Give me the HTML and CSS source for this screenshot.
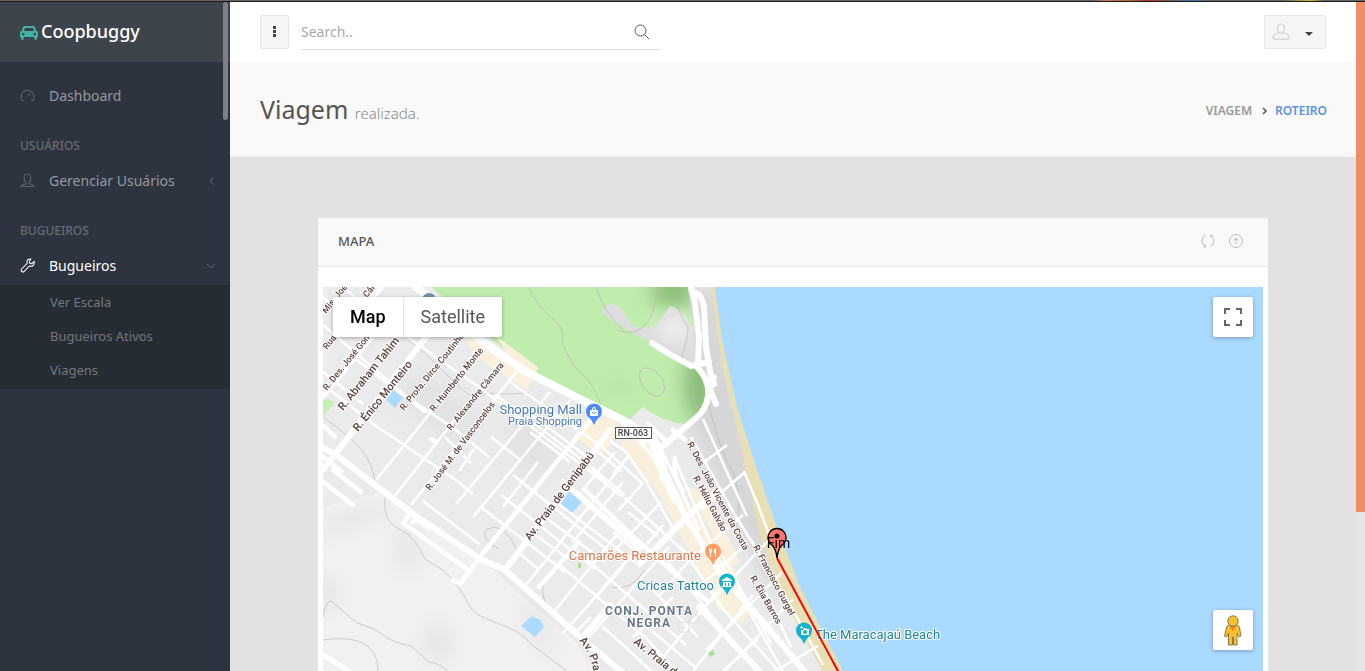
FILE: index.html
```
<!DOCTYPE html>
<html lang="pt-BR">
<head>
<meta charset="utf-8">
<title>Coopbuggy</title>
<meta name="viewport" content="width=device-width, initial-scale=1">
<link rel="stylesheet" href="styles.css">
</head>
<body>
<div class="window-edge"></div>
<div class="app">
  <aside class="sidebar">
    <a class="brand" href="#">
      <svg class="brand-icon" viewBox="0 0 18 16" aria-hidden="true"><path fill="#40b5a4" fill-rule="evenodd" d="M4.800 1h8.400q1.600 0 2 1.500l1 3.500q1.800.2 1.800 2v4h-1v1.600q0 1.400-1.400 1.400t-1.400-1.400v-1.600h-10.400v1.600q0 1.400-1.400 1.400t-1.400-1.400v-1.600h-1v-4q0-1.800 1.800-2l1-3.500q.4-1.500 2-1.500zM4.900 2.900l-.8 3.100h9.800l-.8-3.100zM3.200 7.700a1.300 1.300 0 1 0 .01 0zM14.800 7.700a1.300 1.300 0 1 0 .01 0z"/></svg>
      <span>Coopbuggy</span>
    </a>
    <nav class="menu">
      <a class="item" href="#">
        <svg class="icon" viewBox="0 0 16 16" aria-hidden="true"><path d="M4 13.500l-1.500.3A7 7 0 1 1 13.500 13.800l-1.500-.3M8 8.500l3-2.500M8 1.500v1.500M2 6l1 .5M1.500 9.500h1.200"/></svg>
        <span>Dashboard</span>
      </a>
      <h2 class="heading">USUÁRIOS</h2>
      <a class="item" href="#">
        <svg class="icon" viewBox="0 0 16 16" aria-hidden="true"><path d="M8 1c-5 0-4 8-1.500 9v1.500c-2 .6-5.500.8-5.500 3h14c0-2.200-3.500-2.400-5.500-3v-1.500c2.500-1 3.500-9-1.500-9z"/></svg>
        <span>Gerenciar Usuários</span>
        <svg class="arrow" viewBox="0 0 10 10" aria-hidden="true"><path d="M7.500 1.500l-3.500 3.500 3.500 3.500"/></svg>
      </a>
      <h2 class="heading">BUGUEIROS</h2>
      <a class="item active" href="#">
        <svg class="icon" viewBox="0 0 16 16" aria-hidden="true"><path d="M11.500 1q-3.800-.3-4 3l.2 1.700-6 6q-1.200 1.600.2 2.700t2.600-.2l5.500-5.700q4.800 1.300 5.300-3.700l-.2-1-2.600 2.300-2-.4-.4-2z"/></svg>
        <span>Bugueiros</span>
        <svg class="arrow" viewBox="0 0 10 10" aria-hidden="true"><path d="M1 3l4 4 4-4"/></svg>
      </a>
      <div class="submenu">
        <a href="#">Ver Escala</a>
        <a href="#">Bugueiros Ativos</a>
        <a href="#">Viagens</a>
      </div>
    </nav>
    <div class="side-thumb"></div>
  </aside>

  <main class="main">
    <header class="topbar">
      <button class="btn more" type="button" aria-label="Menu"><svg viewBox="0 0 4 12" width="4" height="12"><path fill="#444" d="M0 0h3v3h-3zM0 4h3v3h-3zM0 8h3v3h-3z"/></svg></button>
      <form class="search">
        <input type="text" aria-label="Search" placeholder="Search..">
        <button type="button" aria-label="Search"><svg viewBox="0 0 16 16" width="16" height="16" fill="none" stroke="#555"><circle cx="6.500" cy="6.500" r="5.500"/><path d="M10.500 10.500l4.500 4.500"/></svg></button>
      </form>
      <button class="btn user" type="button" aria-label="User menu">
        <svg viewBox="0 0 18 18" width="18" height="18" fill="none" stroke="#d2d2d2" stroke-width="1.200"><path d="M9 1q-3.500 0-3.500 4.500t3.500 5q3.500-.5 3.500-5t-3.500-4.500zM6.500 10q-5.500.8-5.500 4.500 0 1.700 1.500 1.700h13q1.500 0 1.500-1.700 0-3.700-5.500-4.500"/></svg>
        <span class="caret"></span>
      </button>
    </header>

    <div class="page-head">
      <h1>Viagem <small>realizada.</small></h1>
      <nav class="crumbs">
        <a href="#">VIAGEM</a>
        <svg viewBox="0 0 6 8" width="6" height="8" fill="none" stroke="#555" stroke-width="1.500"><path d="M1 1l3 3-3 3"/></svg>
        <a class="current" href="#">ROTEIRO</a>
      </nav>
    </div>

    <div class="content">
      <section class="panel">
        <header class="panel-head">
          <h2>MAPA</h2>
          <button type="button" aria-label="Refresh"><svg viewBox="0 0 14 14" width="14" height="14"><path d="M4.500 1.500q-3.500 2-3.500 5.500t3.500 5.500M9.500 12.500q3.500-2 3.500-5.500t-3.500-5.500M2.500 13.200l2.300-.6-1-2.100M11.500.8l-2.300.6 1 2.100"/></svg></button>
          <button type="button" aria-label="Collapse"><svg viewBox="0 0 14 14" width="14" height="14"><circle cx="7" cy="7" r="6.500"/><path d="M7 10.500v-6.500M4.500 6.500l2.500-2.500 2.500 2.500"/></svg></button>
        </header>
        <div class="panel-body">
          <div class="map">
            <svg class="map-art" viewBox="0 0 940 500" preserveAspectRatio="xMinYMin slice" role="img" aria-label="Mapa">
              <defs>
                <filter id="soft" x="-50%" y="-50%" width="200%" height="200%"><feGaussianBlur stdDeviation="9"/></filter>
                <clipPath id="park-clip"><use href="#park"/></clipPath>
                <path id="pin" d="M0 13q-1.500-4-4.500-7a8 8 0 1 1 9 0q-3 3-4.500 7z"/>
                <path id="bend" d="M256 354q18 17 16 60v60"/>
              </defs>
              <rect width="940" height="500" fill="#ebebeb"/>
              <g filter="url(#soft)" fill="#d6d6d6">
                <path d="M310 0h85l40 190 45 130-35-20-80-160z"/>
                <path d="M100 80l60 50-30 30-60-50zM180 145l40-30 20 60-40 20z" opacity=".4"/>
              </g>
              <path fill="#f2f1f0" d="M0 220l55-15 28 20 75 45 30 30 65 55 25 40v105H0z"/>
              <g filter="url(#soft)" fill="#dedede" opacity=".6"><ellipse cx="30" cy="232" rx="40" ry="7" transform="rotate(-20 30 232)"/><ellipse cx="84" cy="260" rx="9" ry="26"/><ellipse cx="2" cy="307" rx="11" ry="16"/><ellipse cx="115" cy="355" rx="12" ry="20"/><ellipse cx="215" cy="340" rx="28" ry="7" transform="rotate(60 215 340)"/></g>
              <path id="park" fill="#c0ecae" d="M108 0h257l3 25 3 14q-5 1-9-8t-15-12l-13 19q-16 6-25 0t-7-12l-12-9q-5 0-8 9 12 12 28 19l22 11 31 19 15 6 9 19q0 22-9 30-7 10-28 5-20-6-30-15l-15 14-45-20-45-27-52-39z"/>
              <g clip-path="url(#park-clip)"><g filter="url(#soft)" fill="#73a85f" opacity=".7"><ellipse cx="378" cy="96" rx="17" ry="40"/><ellipse cx="350" cy="4" rx="22" ry="16"/><ellipse cx="295" cy="100" rx="15" ry="6" opacity=".2"/></g></g>
              <path fill="#ddd" d="M279 26q3-9 8-9 11 1 15 9t7 12q12 7 25 0l13-19q11 3 15 12t9 8l4 41-46-24-22-11-28-19"/>
              <ellipse cx="352" cy="42" rx="16" ry="12" fill="#f1f1f1" filter="url(#soft)"/>
              <path fill="#c6efb7" d="M0 110l12 5-12 15z"/>
              <g fill="#fbf0dc">
                <path d="M142 50l28 5 28 31 10 7-4 10-26-17-28-19z"/>
                <path d="M172 48l44 33-6 6-20-12zM182 74l28 18-6 10-24-18z"/>
                <path d="M262 133l30-2 6 14-20 24-24-17z"/>
                <path d="M300 138l30 17 18 40 32 40 50 88-12 14-24-17-58-114-38-45z" opacity=".9"/>
                <path d="M365 200l18 7 34 68-10 5zM401 265l15 27-8 8z"/>
              </g>
              <path fill="#e9dfb4" d="M388 0h5l24 130 60 170 47 84 56 116h-20l-63-120-40-75-20-57-20-95-18-75z"/>
              <path fill="#aadaff" d="M392 0l7 53 15 67 20 63 20 57 23 60 27 53 16 31 60 116H940V0z"/>
              <g fill="#aadaff"><path d="M70 103l10 7-8 11-9-8zM247 203l14 10-14 15-10-10zM209 329l8 4 4 7-9 10-14-11z"/></g>

              <g fill="none" stroke="#b7b7b7" stroke-width=".8" opacity=".8">
                <path d="M0 130q12 8 30 24t22 39M62 210q-1 15 3 22t15 12 22 28q6 4 13 8t17 16 14 22 28 18 34 21l41 31M0 330q3-16 8-16l26 22q18 5 26 12t28 11l18 16q10 1 20 10M0 353q55-8 55 31"/>
                <path d="M63 35q40 30 65 57t35 14q20 2 43 0M205 0q10 20 24 31t10 24q8 22 21 33t20 37M273 0q9 27 28 44M335 0q-3 30-16 41-12 8-25 2M352 5q2 20 13 35 0 12-6 29 10 18 12 40t15 10q13 50 25 69 9 28 2 55"/>
                <ellipse cx="329" cy="95" rx="10" ry="16" transform="rotate(-38 329 95)"/>
                <path d="M176 262q-20-10-12-20 14-6 24 10l9 17M227 324q-18-28 8-41M288 300q20 5 34-17"/>
              </g>

              <g fill="none" stroke="#fff" stroke-linejoin="round">
                <g stroke-width="2.500">
                  <path d="M0 38l83 71 50 34 33 27M7 103l46 36 80 54 17 14M30 70l73 56M80 47l80 56 54 41 86 66M100 214l56 43M52 11l28 35M0 85l40 32M0 63l60-66M53 193L87 151l73-91M71 210l110-140M88 218L197 80M133 217L227 105M150 230L247 113M203 298L300 177M230 326l70-86M266 350l80-90M0 10l30 28 30-38M20 0l60 50M122 150l26 26M136 184l15-22M172 107l90 68 40 33M187 95l92 65 40 36M190 188l98 78M178 208l94 74M158 220l84 65M168 150l28 22M204 124l60 46M207 145l40 30M215 175l-35 45M195 265l20 17M210 246l34 25M222 230l60 45M233 215l80 61M263 180l20 15M292 165l-30 35M300 195l-50 60"/>
                  <path d="M238 279l85 72 30 33M254 264l109 94M302 211l62 56M300 280l-60 66M320 255l-68 78M340 238l-16 19M280 340l20 18 52 48M300 320l72 60M325 298l50 52M345 275l70 86M360 262l40 60 60 67M268 330l-15 15M310 350l40-40M340 370l60-72M370 384l60-76M400 384l35-32M287 154l16 11 20 29 28 49M275 165l24 20M305 170l-15 17M320 196l-25 28M338 215l-48 50M305 225l30 24M290 245l30 25"/>
                  <path d="M380 132l27 60 17 37M368 150l45 80 18 28 35 58 34 62M352 172l38 90 30 52 40 70M420 228l-55 47-30 35M422 185l-44 38M404 158l-24 18M447 252l-60 63M459 285l-76 78M470 312l-70 74M495 359l-48 28M421 184l14 34 12 32M400 270l48 86M420 260l-50 46M440 300l28 60"/>
                </g>
                <g stroke-width="4.500" stroke-linecap="round">
                  <path d="M137 297l-7-4M137 297l23-31 107-132M80 236l8-10M90 235q3-4 7 0l9 6M80 236l65 47M10 183l28 22M-2 193l32 25M0 170l18 14M108 152l5 3M300 135l22 20M325 137l20 19M350 143l12 10"/>
                  <path d="M0 110l53-65M12 150L0 138M0 368l34 21M352 171q-2 20 8 33M261 202l56 54 67 58M256 255l-40 45"/>
                </g>
                <g stroke-width="6" stroke-linecap="round">
                  <path d="M-7 157l20 11 77 59 67 45 25 11 75 67 60 50M0 183l103-133M182 283L287 143M240 195l77 66M317 277l50-50 28-24M260 350l27-32M376 320l60 64"/>
                  <path d="M340 181l22 48 35 56 60 70 50 60"/>
                  <path stroke-width="8" d="M93 0l67 55 40 28 53 27 47 23 28 18 12 30"/>
                  <path d="M368 0l4 15 4 35-1 31M372 6q7 1 9 15l2 39 5 30 3 7M375 81q12 14 10 28t-12 22l-28 24-11 8M329 56l14 9 25 14 18-4M391 90l-4 12 6 15M331 163q12 8 8 28"/>
                </g>
                <path stroke-width="3" d="M331 148q30 60 45 95M303 139l28 32 20 45"/>
              </g>
              <path fill="none" stroke="#dedede" d="M355 335h12v-7h8v8h-9v9h-9z"/>
              <path fill="#abdf98" d="M385 366l5-3 2 4-5 3zM255 276h3v5h-3z"/>
              <circle cx="106" cy="13" r="7" fill="#6f93aa"/>

              <g class="road">
                <text transform="translate(20 124) rotate(-51)">R. Abraham Tahim</text>
                <text transform="translate(35 145) rotate(-51)">R. Énico Monteiro</text>
                <text transform="translate(207 254) rotate(-53)">Av. Praia de Genipabú</text>
                <text><textPath href="#bend">Av. Praia de</textPath></text>
                <text transform="translate(310 356) rotate(39)">Av. Praia de</text>
              </g>
              <g class="road small">
                <text transform="translate(3 27) rotate(-51)">Mis. Joel</text>
                <text transform="translate(44 11) rotate(-51)">Câmara</text>
                <text transform="translate(4 63) rotate(-51)">Rua</text>
                <text transform="translate(4 104) rotate(-51)">R. Des. José Gonçalves</text>
                <text transform="translate(81 124) rotate(-51)">R. Profa. Dirce Coutinho</text>
                <text transform="translate(111 125) rotate(-51)">R. Humberto Monte</text>
                <text transform="translate(128 144) rotate(-51)">R. Alexandre Câmara</text>
                <text transform="translate(107 204) rotate(-53)">R. José M. de Vasconcelos</text>
                <text transform="translate(364 157) rotate(62)">R. Des. João Vicente da Costa</text>
                <text transform="translate(370 191) rotate(62)">R. Hélio Galvão</text>
                <text transform="translate(430 260) rotate(62)">R. Francisco Gurgel</text>
                <text transform="translate(427 291) rotate(60)">R. Élia Barros</text>
              </g>

              <rect x="292.500" y="140.500" width="36" height="11" fill="#fff" stroke="#555"/>
              <text class="shield" x="310" y="149">RN-063</text>

              <g class="poi">
                <text class="blue" x="259" y="127" text-anchor="end">Shopping Mall</text>
                <text class="blue minor" x="259" y="138" text-anchor="end">Praia Shopping</text>
                <text class="orange" x="378" y="273" text-anchor="end">Camarões Restaurante</text>
                <text class="teal" x="391" y="303" text-anchor="end">Cricas Tattoo</text>
                <text class="teal" x="492" y="352">The Maracajaú Beach</text>
                <text class="district" x="326" y="328" text-anchor="middle">CONJ. PONTA</text>
                <text class="district" x="326" y="340" text-anchor="middle">NEGRA</text>
              </g>
              <g transform="translate(271 125)"><use href="#pin" fill="#4c8df6"/><path fill="#fff" fill-rule="evenodd" d="M-4-2h2q0-3 2-3t2 3h2v6h-8zM-1-2h2q0-2-1-2t-1 2z"/><path fill="none" stroke="#4c8df6" d="M-2 0q2 3 4 0"/></g>
              <g transform="translate(390 265)"><use href="#pin" fill="#ff9e67"/><path fill="#fff" d="M-4-4h1v2h1v-2h1v4l-1 1v4h-1v-4l-1-1zM3-4v9h-1v-4h-1q-1-4 2-5z"/></g>
              <g transform="translate(404 295)"><use href="#pin" fill="#12b5cb"/><path fill="#fff" fill-rule="evenodd" d="M0-5l5 3v1h-10v-1zM-4 0h8v4h1v1h-10v-1h1zM-2 1v3h1v-3zM1 1v3h1v-3z"/></g>
              <g transform="translate(481 344)"><use href="#pin" fill="#12b5cb"/><path fill="#fff" fill-rule="evenodd" d="M-3-5h1v1h1v1h-1v1h-1v-1h-1v-1h1zM0-3h2l1 1h2v6h-8v-5h2v-1zM1-1a2 2 0 1 0 .01 0z"/></g>

              <path d="M454 271l61 113 60 116" fill="none" stroke="red" stroke-width="2"/>
              <path d="M454 271q-1-9-5-13a9 9 0 1 1 10 0q-4 4-5 13z" fill="#fe7569" stroke="#000" stroke-width="1.300"/>
              <circle cx="454" cy="249" r="2.500"/>
              <text class="marker-label" x="455.500" y="261" text-anchor="middle">Fim</text>
            </svg>
            <div class="map-types">
              <button class="selected" type="button">Map</button>
              <button type="button">Satellite</button>
            </div>
            <button class="control fullscreen" type="button" aria-label="Fullscreen"><svg viewBox="0 0 18 18" width="18" height="18" fill="none" stroke="#666" stroke-width="2"><path d="M1 6v-5h5M12 1h5v5M17 12v5h-5M6 17h-5v-5"/></svg></button>
            <button class="control pegman" type="button" aria-label="Street View"><svg viewBox="0 0 18 31" width="18" height="31"><path fill="#fbbf2d" stroke="#8c7a55" stroke-width="1" d="M5 10h8q2 0 2.500 3l1.500 8-2 1-2-4v12H9.500v-8h-1v8H4.500V18l-2 4-2-1 2-8q.5-3 2.500-3z"/><path fill="#e8812d" d="M5.500 10.500h7l-3.500 6z"/><circle cx="9" cy="6" r="5.200" fill="#fbbf2d" stroke="#8c7a55"/></svg></button>
          </div>
        </div>
      </section>
    </div>
  </main>
  <div class="page-rail"><div class="page-thumb"></div></div>
</div>
</body>
</html>
```
FILE: styles.css
```
* { box-sizing: border-box; }
body {
  margin: 0;
  height: 100vh;
  display: flex;
  flex-direction: column;
  overflow: hidden;
  background: #e2e2e2;
  color: #555;
  font-family: "Noto Sans", "Open Sans", sans-serif;
  font-size: 14px;
  line-height: 20px;
}
a { color: inherit; text-decoration: none; }
button { padding: 0; border: 0; background: none; font: inherit; color: inherit; }
svg { display: block; flex: none; }
h1, h2 { margin: 0; }

.window-edge {
  flex: none;
  height: 2px;
  border-bottom: 1px solid #1c1c1c;
  background: linear-gradient(90deg, #666 80%, #c76 81%, #a63 83%, #b33 84%, #666 86%, #47a 87%, #666 89%, #666 94%, #cb3 96%, #666 97%);
}
.app { flex: 1; min-height: 0; display: flex; }

/* Sidebar */
.sidebar { position: relative; flex: none; width: 230px; background: #2d343f; color: #96999e; }
.brand { display: flex; align-items: center; gap: 3px; height: 60px; padding: 0 20px 2px; background: #3e444c; color: #fff; font-size: 18px; font-weight: 500; }
.brand-icon { width: 18px; height: 16px; margin-top: 3px; }
.menu { padding-top: 16px; }
.item { display: flex; align-items: center; gap: 14px; height: 35px; padding: 0 14px 0 20px; }
.item span { flex: 1; }
.item.active { color: #fff; margin-bottom: 2px; }
.icon { width: 15px; height: 15px; fill: none; stroke: #5d636c; stroke-width: 1.100; }
.active .icon { stroke: #fff; }
.arrow { width: 10px; height: 10px; fill: none; stroke: #646a73; }
.heading { height: 50px; padding: 23px 20px 0; color: #666b73; font-size: 12px; line-height: 20px; font-weight: 500; }
.submenu { padding-bottom: 2px; background: #262c34; color: #73787e; font-size: 13px; }
.submenu a { display: flex; align-items: center; height: 34px; padding-left: 50px; }
.side-thumb { position: absolute; top: 0; right: 2px; width: 5px; height: 118px; border-radius: 3px; background: #7d8187; }

/* Header */
.main { flex: 1; min-width: 0; overflow: hidden; }
.topbar { display: flex; align-items: center; height: 60px; padding: 0 30px; background: #fff; }
.btn { display: flex; align-items: center; justify-content: center; height: 34px; border: 1px solid #e6e6e6; border-radius: 2px; background: #f5f5f5; }
.more { width: 29px; margin-right: 12px; }
.search { display: flex; width: 360px; height: 36px; border-bottom: 1px solid #e0e0e0; }
.search input { flex: 1; min-width: 0; padding: 0; border: 0; outline: 0; background: none; font: inherit; color: #555; }
.search input::placeholder { color: #aaa; opacity: 1; }
.search button { width: 38px; display: flex; align-items: center; justify-content: center; }
.user { width: 62px; gap: 15px; margin-left: auto; padding-right: 6px; }
.caret { border: 4px solid transparent; border-top-color: #444; border-bottom: 0; margin-top: 4px; }

.page-head { display: flex; align-items: center; justify-content: space-between; height: 95px; padding: 3px 29px 0 30px; border-bottom: 1px solid #f0f0f0; background: #f9f9f9; }
h1 { font-size: 25px; line-height: 36px; font-weight: 400; color: #555; }
h1 small { font-size: 15px; font-weight: 300; color: #888; }
.crumbs { display: flex; align-items: center; gap: 10px; font-size: 12px; font-weight: 600; color: #999; }
.crumbs svg { margin-right: -3px; }
.crumbs .current { color: #5b93d9; }

/* Map panel */
.content { padding: 61px 88px 30px; }
.panel { background: #fff; }
.panel-head { display: flex; align-items: center; gap: 14px; height: 49px; padding: 0 25px 2px 20px; background: #f9f9f9; border-bottom: 1px solid #e5e5e5; }
.panel-head h2 { flex: 1; font-size: 13px; font-weight: 500; color: #555; }
.panel-head svg { fill: none; stroke: #bbb; }
.panel-body { padding: 20px 5px; }
.map { position: relative; height: 500px; overflow: hidden; font-family: Roboto, sans-serif; }
.map-art { width: 100%; height: 100%; }
.map-types { position: absolute; top: 10px; left: 10px; display: flex; border-radius: 2px; box-shadow: 0 1px 4px rgba(0, 0, 0, .3); background: #fff; font-size: 18px; }
.map-types button { height: 40px; padding: 0 17px; color: #565656; }
.map-types button + button { border-left: 1px solid #e4e4e4; }
.map-types .selected { color: #000; font-weight: 500; }
.control { position: absolute; right: 10px; width: 40px; height: 40px; display: flex; align-items: center; justify-content: center; border-radius: 2px; background: #fff; box-shadow: 0 1px 4px rgba(0, 0, 0, .3); }
.fullscreen { top: 10px; }
.pegman { bottom: 137px; }

.road text, .poi text { paint-order: stroke; stroke: #fff; stroke-width: 2px; stroke-linejoin: round; }
.road { fill: #5d403c; font-size: 11px; font-weight: 500; }
.road.small { font-size: 9px; }
.poi { font-size: 13px; }
.blue { fill: #4576b5; }
.minor { font-size: 11px; }
.orange { fill: #d97548; }
.teal { fill: #218491; }
.district { fill: #68788a; font-size: 12px; font-weight: 700; letter-spacing: 1px; }
.shield { fill: #444; font-size: 9px; font-weight: 500; text-anchor: middle; }
.marker-label { font-size: 14px; }

/* Page scroll rail */
.page-rail { flex: none; width: 9px; background: #e5e5e5; }
.page-thumb { height: 510px; background: #f08d66; }
```
